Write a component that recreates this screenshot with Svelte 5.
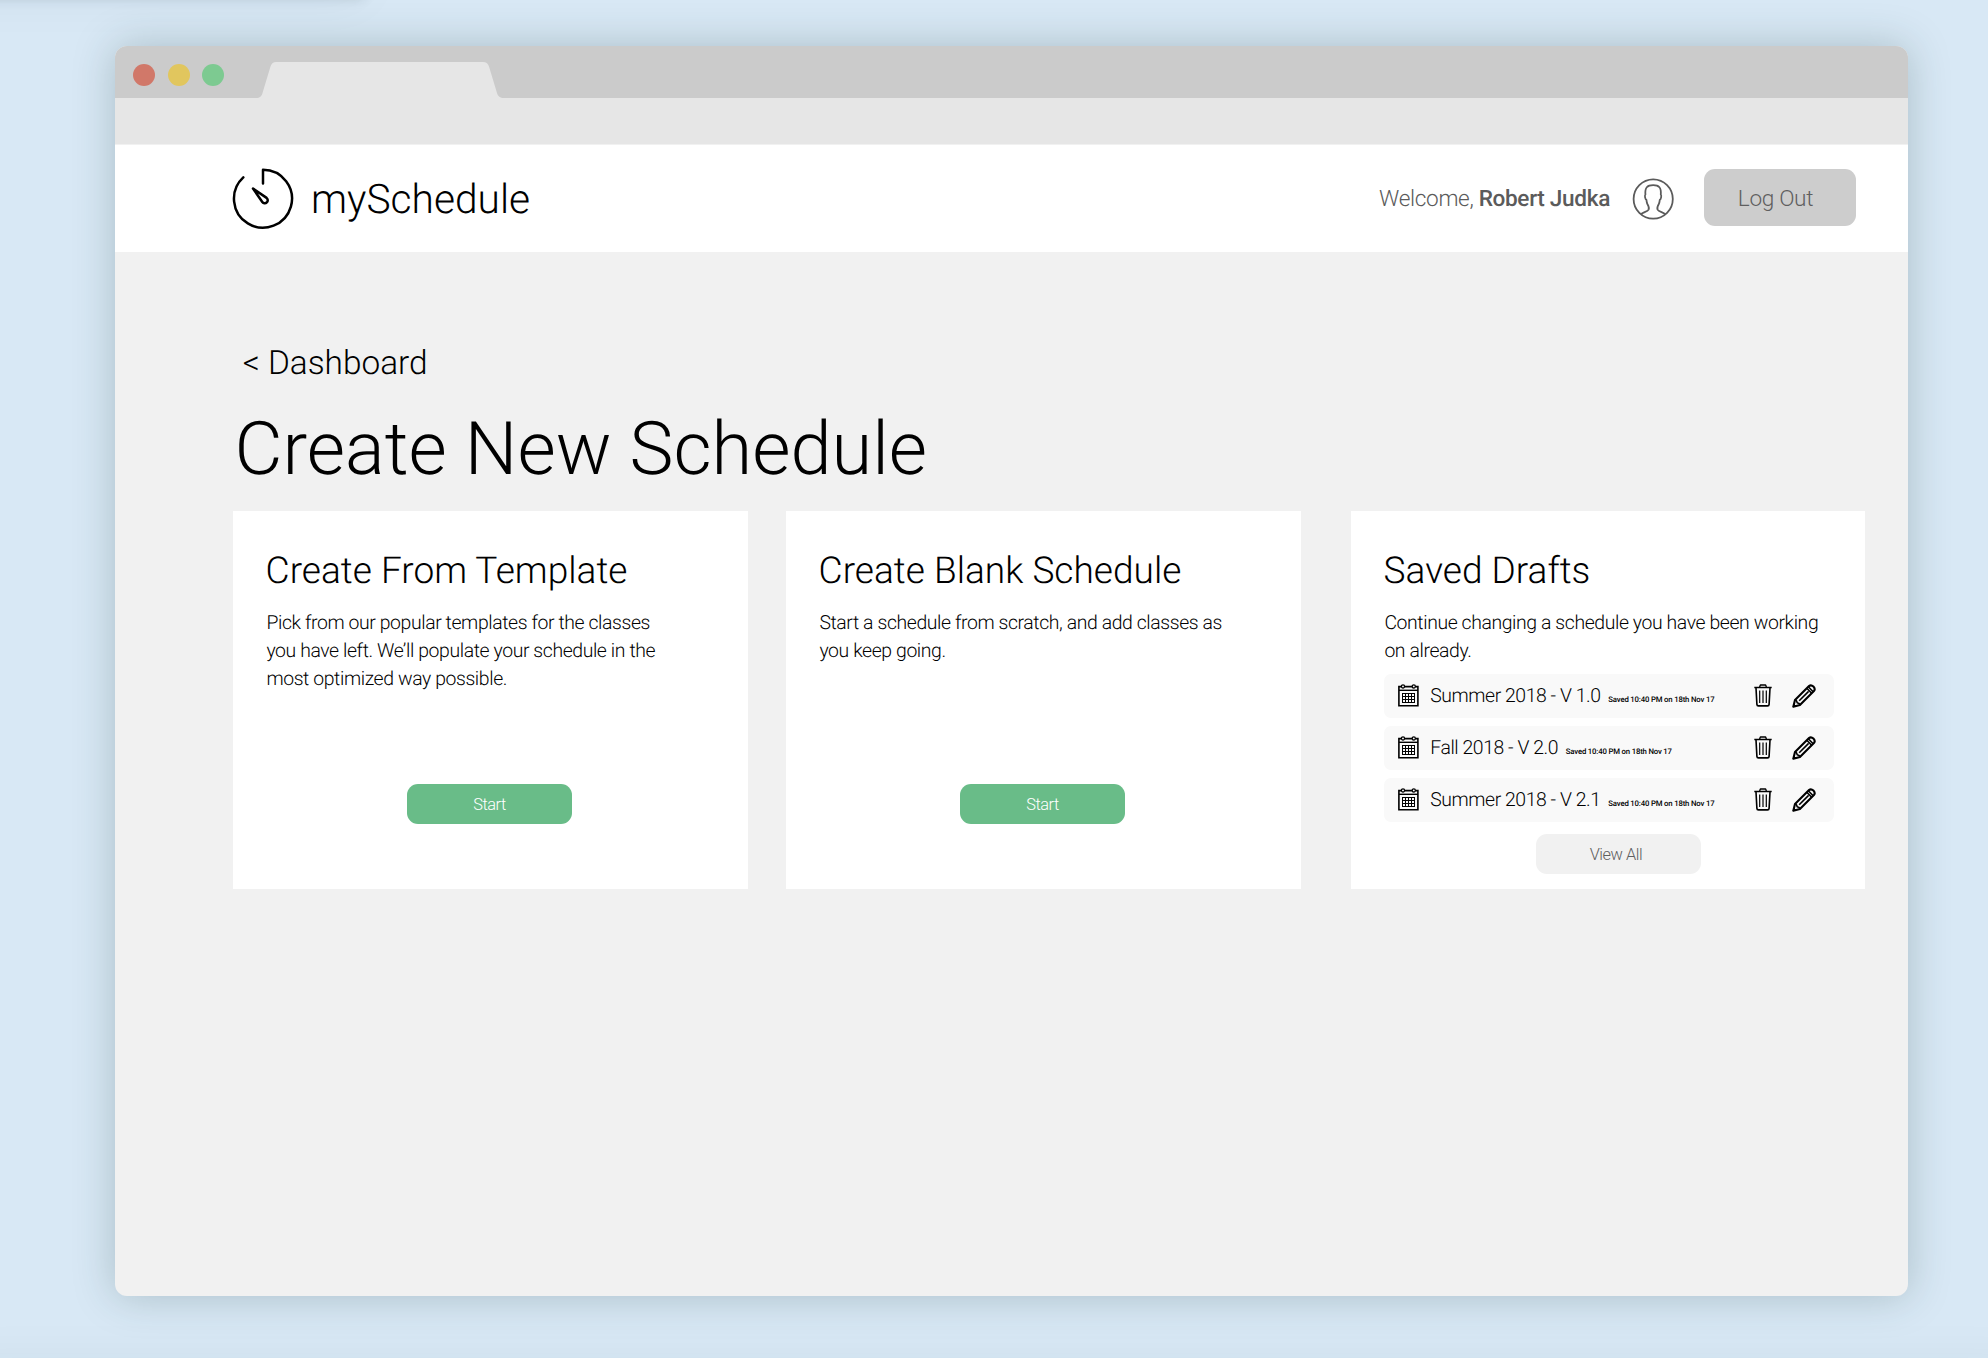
<script>
  const drafts = [
    { name: 'Summer 2018 - V 1.0', saved: 'Saved 10:40 PM on 18th Nov 17' },
    { name: 'Fall 2018 - V 2.0', saved: 'Saved 10:40 PM on 18th Nov 17' },
    { name: 'Summer 2018 - V 2.1', saved: 'Saved 10:40 PM on 18th Nov 17' }
  ];
</script>

<div class="desktop">
  <div class="neighbour above"></div>
  <div class="neighbour below"></div>

  <div class="window">
    <div class="tabbar">
      <span class="dot red"></span>
      <span class="dot yellow"></span>
      <span class="dot green"></span>
      <svg class="tab" width="248" height="36" viewBox="0 0 248 36">
        <path d="M0 36 C4 36 5.5 34.5 6.5 31 L14.5 4.5 C15.5 1.2 17.5 0 20 0 H227 C230 0 232 1.2 233 4.5 L241 31 C242 34.5 244 36 248 36 Z" fill="#e6e6e6" />
      </svg>
    </div>
    <div class="toolbar"></div>

    <header>
      <svg class="logo" width="62" height="62" viewBox="0 0 62 62" fill="none" stroke="#000" stroke-width="2.5" stroke-linecap="round" stroke-linejoin="round">
        <path d="M31 15.5 V1.7 A29 29 0 1 1 11.3 9.4" />
        <path d="M21 20.5 L34.6 29.9 A3 3 0 1 1 30.3 34 Z" />
      </svg>
      <span class="brand">mySchedule</span>
      <div class="account">
        <span class="welcome">Welcome, <b>Robert Judka</b></span>
        <svg class="avatar" width="42" height="44" viewBox="0 0 42 44" fill="none" stroke="#5b5b5b" stroke-width="1.8" stroke-linejoin="round">
          <ellipse cx="21.2" cy="22" rx="19.6" ry="19.7" />
          <path d="M9 37.2 C11 35.2 15.4 34.8 16.6 32.6 C17.4 31 16.6 29 15.4 27 C14.8 25.8 14.6 24.4 14.4 22.8 C13.2 22.4 12.4 18.4 13.4 17.6 C12.8 10.6 15.2 8.2 21.2 8.2 C27 8.2 29.4 10.6 28.8 17.6 C29.8 18.4 29 22.4 27.8 22.8 C27.6 24.4 27.4 25.8 26.8 27 C25.6 29 24.8 31 25.6 32.6 C26.8 34.8 31.2 35.2 33.2 37.2" />
        </svg>
        <button class="logout">Log Out</button>
      </div>
    </header>

    <main>
      <a class="back" href="#dashboard">&lt; Dashboard</a>
      <h1>Create New Schedule</h1>

      <div class="cards">
        <section class="card">
          <h2>Create From Template</h2>
          <p>Pick from our popular templates for the classes<br />you have left. We’ll populate your schedule in the<br />most optimized way possible.</p>
          <button class="start">Start</button>
        </section>

        <section class="card">
          <h2>Create Blank Schedule</h2>
          <p>Start a schedule from scratch, and add classes as<br />you keep going.</p>
          <button class="start">Start</button>
        </section>

        <section class="card saved">
          <h2>Saved Drafts</h2>
          <p>Continue changing a schedule you have been working<br />on already.</p>
          <ul>
            {#each drafts as draft}
              <li>
                <svg class="calendar" width="21" height="23" viewBox="0 0 21 23" fill="none" stroke="#000">
                  <path d="M3.2 2.6 H0.9 V21.8 H19.9 V2.6 H17.6 M6.8 2.6 H14" stroke-width="1.6" />
                  <path d="M1 6.3 H20" stroke-width="1.4" />
                  <circle cx="5" cy="2.4" r="1.6" stroke-width="1.3" />
                  <circle cx="15.8" cy="2.4" r="1.6" stroke-width="1.3" />
                  <path d="M4 9.5 H17 M4 12.5 H17 M4 15.5 H17 M4 18.5 H17 M4.5 9 V19 M7.5 9 V19 M10.5 9 V19 M13.5 9 V19 M16.5 9 V19" stroke-width="1" />
                </svg>
                <span class="name">{draft.name}</span>
                <span class="time">{draft.saved}</span>
                <svg class="trash" width="18" height="23" viewBox="0 0 18 23" fill="none" stroke="#000" stroke-linejoin="round">
                  <path d="M0.3 3.5 H17.7" stroke-width="1.5" />
                  <path d="M5.6 3 L6.4 1 H11.6 L12.4 3" stroke-width="1.4" />
                  <path d="M2 4 L2.9 20.4 Q3 21.9 4.4 21.9 H13.6 Q15 21.9 15.1 20.4 L16 4" stroke-width="1.6" />
                  <path d="M5.7 6.6 V19 M9 6.6 V19 M12.3 6.6 V19" stroke-width="1.2" />
                </svg>
                <svg class="pencil" width="24" height="24" viewBox="0 0 24 24" fill="none" stroke="#000" stroke-linejoin="round">
                  <path d="M1.3 22.7 L3 16.1 L17 2.1 Q19 0.3 21.4 2.6 Q23.7 5 21.9 7 L7.9 21 Z" stroke-width="2.1" />
                  <path d="M3 16.1 Q4 15.8 4.6 17 L5.2 18.8 L7 19.4 Q8.2 20 7.9 21 M14.8 4.3 L19.7 9.2 M16.3 2.8 L21.2 7.7" stroke-width="1.6" />
                  <path d="M7.2 16.8 L16.6 7.4" stroke-width="1.6" />
                  <path d="M1.3 22.7 L2 20 L4 22 Z" fill="#000" stroke-width="1" />
                </svg>
              </li>
            {/each}
          </ul>
          <button class="view-all">View All</button>
        </section>
      </div>
    </main>
  </div>
</div>

<style>
  :global(body) {
    margin: 0;
    overflow: hidden;
  }
  .desktop {
    position: relative;
    box-sizing: border-box;
    width: 1988px;
    height: 1358px;
    padding: 46px 0 0 115px;
    overflow: hidden;
    background: #d8e8f5;
    font-family: Roboto, 'Liberation Sans', sans-serif;
    font-weight: 300;
    color: #000;
    text-rendering: geometricPrecision;
  }
  /* Windows just off screen, of which only the shadows are visible. */
  .neighbour {
    position: absolute;
    height: 40px;
  }
  .above {
    top: -43px;
    left: -100px;
    width: 464px;
    box-shadow: 0 0 12px rgba(20, 45, 50, 0.2), 0 0 50px rgba(20, 45, 50, 0.05);
  }
  .below {
    top: 1378px;
    left: -60px;
    width: 2100px;
    box-shadow: 0 0 60px rgba(20, 45, 50, 0.1);
  }
  .window {
    position: relative;
    width: 1793px;
    height: 1250px;
    border-radius: 12px;
    overflow: hidden;
    background: #f1f1f1;
    box-shadow: 0 0 42px rgba(30, 65, 60, 0.25);
  }
  .tabbar {
    display: flex;
    box-sizing: border-box;
    height: 52px;
    padding: 17.5px 0 0 18px;
    gap: 12.5px;
    background: #cbcbcb;
  }
  .dot {
    width: 22px;
    height: 22px;
    border-radius: 50%;
  }
  .red { background: #d17869; }
  .yellow { background: #e1c65e; }
  .green { background: #7dca91; }
  .tab {
    margin: -1.5px 0 0 19px;
  }
  .toolbar {
    height: 46px;
    border-bottom: 1px solid #f1f1f1;
    background: #e6e6e6;
  }
  header {
    display: flex;
    align-items: center;
    box-sizing: border-box;
    height: 107px;
    padding: 0 52px 0 117px;
    background: #fff;
  }
  .brand {
    margin-left: 17px;
    font-size: 40.7px;
    line-height: 48px;
  }
  .account {
    display: flex;
    align-items: center;
    margin-left: auto;
    color: #5b5b5b;
    font-size: 22.6px;
    letter-spacing: -0.33px;
  }
  .welcome b {
    font-weight: 500;
  }
  .avatar {
    margin: 1px 30px 0 22px;
  }
  button {
    display: block;
    border: 0;
    border-radius: 11px;
    font: inherit;
    letter-spacing: inherit;
  }
  .logout {
    width: 152px;
    height: 57px;
    margin-top: -2px;
    padding: 2px 9px 0 0;
    background: #cdcdcd;
    color: #5f5f5f;
  }
  main {
    padding: 92px 0 0 118px;
  }
  .back {
    display: block;
    margin-left: 9.7px;
    font-size: 33.4px;
    line-height: 40px;
    color: inherit;
    text-decoration: none;
  }
  h1 {
    margin: 26px 0 21px 1.5px;
    font-size: 74px;
    line-height: 80px;
    font-weight: 300;
  }
  .cards {
    display: grid;
    grid-template-columns: 515px 515px 514px;
    column-gap: 38px;
  }
  .card {
    display: flex;
    flex-direction: column;
    box-sizing: border-box;
    height: 378px;
    padding: 39px 17px 65px 33px;
    background: #fff;
  }
  .saved {
    margin-left: 12px;
    margin-right: -12px;
    padding: 39px 31px 15px 33px;
  }
  h2 {
    margin: 0 0 15px -0.4px;
    font-size: 37.05px;
    line-height: 44px;
    font-weight: 300;
  }
  p {
    margin: 0 0 0 0.4px;
    font-size: 19.4px;
    line-height: 28px;
    letter-spacing: -0.395px;
    white-space: nowrap;
  }
  .start,
  .view-all {
    width: 165px;
    height: 40px;
    margin-top: auto;
    font-size: 16.4px;
    letter-spacing: -0.45px;
  }
  .start {
    margin-left: 141px;
    padding: 0;
    background: #69bc88;
    color: #fff;
  }
  .view-all {
    margin-left: 152px;
    padding: 0 5px 0 0;
    background: #f1f1f1;
    color: #5f5f5f;
  }
  ul {
    display: grid;
    row-gap: 8px;
    margin: 9px 0 0;
    padding: 0;
    list-style: none;
  }
  li {
    display: flex;
    align-items: center;
    box-sizing: border-box;
    height: 44px;
    padding: 0 18px 0 14px;
    border-radius: 7px;
    background: #f9f9f9;
  }
  .calendar,
  .trash,
  .pencil {
    margin-top: -1px;
  }
  .name {
    margin-left: 11.3px;
    font-size: 19.4px;
    line-height: 24px;
    letter-spacing: -0.44px;
    white-space: nowrap;
  }
  .time {
    margin: 8px 0 0 7.7px;
    font-size: 7.75px;
    line-height: 10px;
    font-weight: 500;
    letter-spacing: -0.17px;
    white-space: nowrap;
  }
  .trash {
    margin-left: auto;
    margin-right: 20.5px;
  }
</style>
